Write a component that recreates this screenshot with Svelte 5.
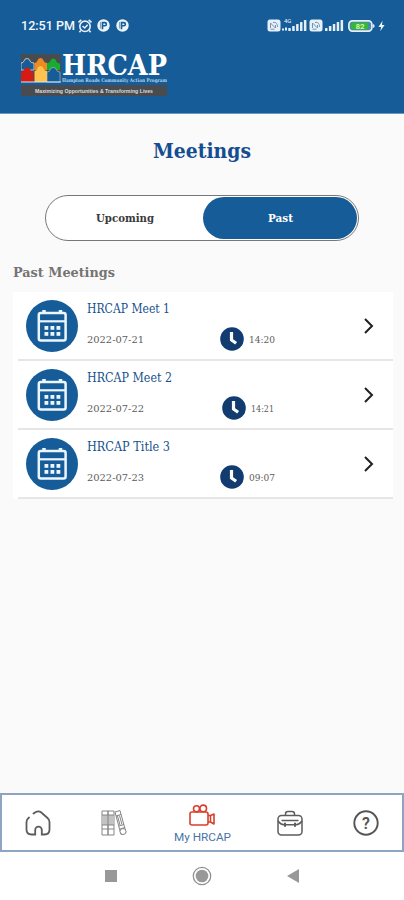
<script>
  const meetings = [
    { title: 'HRCAP Meet 1', date: '2022-07-21', time: '14:20', shift: 0, tw: 83 },
    { title: 'HRCAP Meet 2', date: '2022-07-22', time: '14:21', shift: 2, tw: 85 },
    { title: 'HRCAP Title 3', date: '2022-07-23', time: '09:07', shift: 0, tw: 83 }
  ];
  const bars = [3, 5, 7, 9, 11];
  const slab = "'DejaVu Serif', serif";
  const sans = 'Roboto, sans-serif';
</script>

{#snippet label(text, width, height, size, weight, color, family)}
  <svg class="label" {width} {height} style:font-family={family}>
    <text x="0" y={height * 0.76} textLength={width} lengthAdjust="spacingAndGlyphs" font-size={size} font-weight={weight} fill={color}>{text}</text>
  </svg>
{/snippet}

{#snippet signal()}
  <svg width="20" height="13" viewBox="0 0 20 13" fill="#e6eff8">
    {#each bars as h, i}
      <rect x={1 + i * 3.9} y={12 - h} width="2.5" height={h} rx=".6" />
    {/each}
  </svg>
{/snippet}

{#snippet sim()}
  <svg width="14" height="13" viewBox="0 0 14 13">
    <rect x=".5" y=".5" width="13" height="12" rx="2.5" fill="#e8f0f7" />
    <path d="M3.5 9V4l5 5V6M6 3.5c3-.6 4.5 1 4.5 4.500M3.500 10.200h4" fill="none" stroke="#7295b8" />
  </svg>
{/snippet}

<div class="screen">
  <header>
    <div class="status">
      <div class="left">
        {@render label('12:51 PM', 54, 16, 13, 500, '#f4f8fc', sans)}
        <svg class="alarm" width="16" height="16" viewBox="0 0 16 16" fill="none" stroke="#e8f0f7" stroke-width="1.6">
          <circle cx="8" cy="8.300" r="5.200" /><path d="M1.500 4.300 4.300 1.800M11.700 1.800l2.800 2.500M3.800 12.500l-1.400 1.700M12.200 12.500l1.400 1.700M5.500 8l2.200 2 3-3.200" />
        </svg>
        {#each [0, 1] as n}
          <svg class="badge" width="13" height="13" viewBox="0 0 13 13">
            <circle cx="6.500" cy="6.500" r="6.200" fill="#edf4fa" />
            <path d="M3.500 3v6.500" stroke="#7ea4c8" stroke-width="1.200" />
            <path d="M5.500 2.800v7.500M5.500 3.600h2.300a1.500 1.500 0 0 1 0 3.200H5.500" fill="none" stroke="#155c98" stroke-width="1.600" />
          </svg>
        {/each}
      </div>
      <div class="right">
        {@render sim()}
        <div class="net"><span>4G</span>
          <svg width="26" height="13" viewBox="0 0 26 13" fill="#e6eff8">
            <rect x="1" y="9.500" width="2" height="2" /><rect x="4" y="8.500" width="2" height="3" />
            {#each bars as h, i}<rect x={7.3 + i * 3.9} y={12 - h} width="2.500" height={h} rx=".6" />{/each}
          </svg>
        </div>
        {@render sim()}
        {@render signal()}
        <svg class="battery" width="27" height="12" viewBox="0 0 27 12">
          <rect x=".9" y=".9" width="23" height="10.200" rx="3.500" fill="#468ab0" stroke="#e5eef4" stroke-width="1.700" />
          <rect x="3" y="2.800" width="17" height="6.400" rx="1.500" fill="#35b832" />
          <text x="7.500" y="9" font-size="8" font-weight="700" font-family="Roboto, sans-serif" fill="#d8f5a0">82</text>
          <path d="M25 4v4l1.500-1V5z" fill="#e5eef4" />
        </svg>
        <svg class="bolt" width="7" height="12" viewBox="0 0 7 12"><path d="M4.500.8.5 7h2.700l-1 4.200L6.600 5H4z" fill="#edf5fb" /></svg>
      </div>
    </div>
    <svg class="logo" width="152" height="48" viewBox="0 0 152 48">
      <rect x="0" y="3" width="40" height="28" fill="#484b4f" />
      <path d="M0 19v-7q2.500 0 3-2 .5-2.500 3-2.500T9 10q.5 2 4 2v7z" fill="#155c98" stroke="#d6dde2" stroke-width=".8" />
      <path d="M26 19v-7q3 0 3.300-2 .5-2.500 3-2.500t3 2.500q.300 2 3.700 2.500V19z" fill="#18ad31" />
      <path d="M13.500 19v-7q2.500-.500 3-2.500.5-2.500 3-2.500t3 2.500q.5 2 3.500 2.500v7z" fill="#ee8a23" />
      <path d="M26 31V21q3 0 3.300-2.500.5-2 3-2t3 2Q35.600 21 39 21v10z" fill="#155c98" stroke="#d6dde2" stroke-width=".5" />
      <path d="M0 31V21q2.700-.500 3-2.500.5-2 3-2t3 2q.3 2 3.500 2.500v10z" fill="#d41c14" />
      <path d="M13.500 31V20q2.700-.500 3-2.500.5-2.500 3-2.500t3 2.500q.3 2 3.500 2.500v11z" fill="#ffc34d" />
      <path d="M0 31h40" stroke="#dce8f0" />
      <text x="41" y="24" textLength="105" lengthAdjust="spacingAndGlyphs" font-family="'DejaVu Serif',serif" font-size="28" font-weight="700" fill="#fff">HRCAP</text>
      <text x="41" y="31" textLength="105" lengthAdjust="spacingAndGlyphs" font-family="'DejaVu Serif',serif" font-size="5" font-weight="700" fill="#b3d3ec">Hampton Roads Community Action Program</text>
      <rect x="0" y="34" width="146" height="11" fill="#484b4f" />
      <text x="14" y="41.500" textLength="118" lengthAdjust="spacingAndGlyphs" font-family="'Liberation Sans',sans-serif" font-size="5.500" font-weight="700" fill="#ddd">Maximizing Opportunities &amp; Transforming Lives</text>
    </svg>
  </header>

  <main>
    <h1>{@render label('Meetings', 98, 32, 21, 700, '#154d91', slab)}</h1>
    <div class="toggle">
      <button>{@render label('Upcoming', 58, 16, 10.5, 700, '#3a3a3a', slab)}</button>
      <button class="active">{@render label('Past', 25, 16, 11, 700, '#fff', slab)}</button>
    </div>
    <h2>{@render label('Past Meetings', 102, 20, 13.5, 700, '#747474', slab)}</h2>
    <ul>
      {#each meetings as m}
        <li>
          <svg class="calendar" width="52" height="52" viewBox="0 0 52 52">
            <circle cx="26" cy="26" r="26" fill="#155c98" />
            <rect x="12.800" y="13" width="26.800" height="27.500" rx="2" fill="none" stroke="#edf6ff" stroke-width="2.500" />
            <path d="M12.500 21.300h27" stroke="#edf6ff" stroke-width="2.200" />
            <path d="M18 10v4M34.500 10v4" stroke="#edf6ff" stroke-width="3.500" />
            {#each [26, 32] as y}{#each [18.5, 24.5, 30.5] as x}<rect {x} {y} width="3.800" height="3.800" fill="#edf6ff" />{/each}{/each}
          </svg>
          <div class="info">
            {@render label(m.title, m.tw, 16, 12, 400, '#15518c', slab)}
            <div class="when">
              <div class="date">{@render label(m.date, 57, 14, 10, 400, '#5c5c5c', slab)}</div>
              <div class="time" style:padding-left="{m.shift}px">
                <svg width="24" height="24" viewBox="0 0 24 24"><circle cx="12" cy="12" r="11.800" fill="#123c70" /><path d="M11.500 5v8l4.600 3.300" fill="none" stroke="#fff" stroke-width="3.200" /></svg>
                {@render label(m.time, m.time === '14:21' ? 23 : 26, 14, 10, 400, '#5c5c5c', slab)}
              </div>
            </div>
          </div>
          <svg class="chevron" width="12" height="18" viewBox="0 0 12 18"><path d="m2 2 7 7-7 7" fill="none" stroke="#202020" stroke-width="2" /></svg>
        </li>
      {/each}
    </ul>
  </main>

  <nav>
    <a href="#home" aria-label="Home">
      <svg width="26" height="26" viewBox="0 0 26 26" fill="none" stroke="#5c5c5c" stroke-width="1.800" stroke-linecap="round">
        <path d="M4 7.500Q1.500 9.500 1.500 12v7.500q0 5 5 5h3.700V20a3.300 3.300 0 0 1 6.600 0v4.500h2.700q5 0 5-5V12q0-2.500-2-4L16 2.300Q13 0 8.500 3.500" />
      </svg>
    </a>
    <a class="library" href="#library" aria-label="Library">
      <svg width="26" height="26" viewBox="0 0 26 26" fill="none" stroke="#858585" stroke-width="1">
        <path d="M1 1h6v24H1zM7 1h6v24H7zM1 5h12M1 15h12M1 19h12M3 5v10M5 5v10M9 5v10M11 5v10M14 2l5-1.500 6 22-5 2zM15 6l5-1.500M18 16l5-1.500M19 19l5-1.500M16.500 6l2.500 9M18.500 5.500l2.500 9" />
        <circle cx="22" cy="21.500" r="3" fill="#fff" />
      </svg>
    </a>
    <a href="#my" class="current">
      <svg width="26" height="23" viewBox="0 0 26 23" fill="none" stroke="#d8402c" stroke-width="1.600" stroke-linejoin="round">
        <circle cx="7.500" cy="4.800" r="3" /><circle cx="14.200" cy="4.400" r="3.300" />
        <rect x="1" y="8" width="18" height="13" rx="2" /><path d="M19 11.500h2.500v6.500H19M21.500 11.500l3.500-1.500v10l-3.500-2" />
      </svg>
      {@render label('My HRCAP', 57, 14, 11.5, 400, '#4a74a8', sans)}
    </a>
    <a class="work" href="#work" aria-label="Work">
      <svg width="26" height="26" viewBox="0 0 26 26" fill="none" stroke="#5c5c5c" stroke-width="1.500">
        <rect x="1" y="5.500" width="24" height="19.500" rx="3.500" /><path d="M8.500 5.500V4q0-2.500 2.500-2.500h4q2.500 0 2.500 2.500v1.500M1 11q2.500 3.500 6 3.700M9 14.700h8M19 14.700q3.500-.200 6-3.700M4.500 10.500h17" /><path d="M8 12.700v4M18 12.700v4" stroke-width="2" />
      </svg>
    </a>
    <a href="#help" aria-label="Help">
      <svg width="26" height="26" viewBox="0 0 26 26"><circle cx="13" cy="13" r="11.700" fill="none" stroke="#555" stroke-width="1.900" /><text x="13" y="18.500" text-anchor="middle" font-family="Roboto, sans-serif" font-size="16" font-weight="600" fill="#555">?</text></svg>
    </a>
  </nav>
  <footer>
    <svg width="12" height="12"><rect width="12" height="12" fill="#989898" /></svg>
    <svg width="20" height="20" viewBox="0 0 20 20"><circle cx="10" cy="10" r="8.700" fill="none" stroke="#919191" stroke-width="1.300" /><circle cx="10" cy="10" r="6.300" fill="#989898" /></svg>
    <svg width="12" height="14"><path d="M12 0v14L0 7z" fill="#989898" /></svg>
  </footer>
</div>

<style>
  :global(body) { background: #fafafa; }
  * { box-sizing: border-box; }
  svg { display: block; flex: none; }
  .label { overflow: visible; }
  .screen { width: 404px; height: 900px; display: flex; flex-direction: column; overflow: hidden; background: #fafafa; }
  header { height: 114px; flex: none; background: #155c98; padding: 17px 19px 0 21px; border-bottom: 1px solid #6c98bd; }
  .status { display: flex; justify-content: space-between; height: 17px; }
  .left, .right { display: flex; align-items: center; }
  .alarm { margin-left: 2px; margin-right: 4px; }
  .badge { margin-right: 6px; }
  .net { margin: 0 2px 0 0; position: relative; }
  .net span { position: absolute; top: -2px; left: 3px; font: 6px Roboto, sans-serif; color: #eef5fb; }
  .right > svg:nth-child(4) { margin-left: 1px; }
  .battery { margin-left: 4px; }
  .bolt { margin-left: 3px; }
  .logo { margin-top: 17px; }
  main { flex: 1; }
  h1 { margin: 20px 0 0; display: flex; justify-content: center; height: 32px; }
  .toggle { display: flex; width: 314px; height: 46px; margin: 29px 0 0 45px; border: 1px solid #777; border-radius: 23px; padding: 1px; background: #fff; }
  button { border: 0; background: none; width: 156px; display: grid; place-items: center; padding: 0; border-radius: 22px; }
  .active { background: #155c98; flex: 1; }
  h2 { margin: 21px 0 0 13px; height: 20px; }
  ul { list-style: none; margin: 10px 11px 0 13px; padding: 0 0 0 5px; background: #fff; }
  li { height: 69px; display: flex; align-items: flex-start; padding: 8px 18px 0 8px; border-bottom: 2px solid #e6e6e6; }
  .info { flex: 1; padding: 1px 0 0 9px; }
  .when { display: flex; align-items: center; margin-top: 10px; height: 24px; }
  .date { width: 133px; }
  .time { display: flex; align-items: center; gap: 5px; }
  .chevron { margin-top: 17px; }
  nav { height: 59px; flex: none; background: #fff; border: 2px solid #8fa4c3; display: flex; align-items: center; justify-content: space-between; padding: 0 23px; }
  nav a { display: flex; flex-direction: column; align-items: center; text-decoration: none; }
  .library { margin: 0 -2px 0 2px; }
  .work { margin: 0 2px 0 -2px; }
  .current { gap: 3px; padding-top: 2px; }
  footer { height: 48px; flex: none; background: #fff; display: flex; align-items: center; justify-content: space-between; padding: 0 105px; }
</style>
